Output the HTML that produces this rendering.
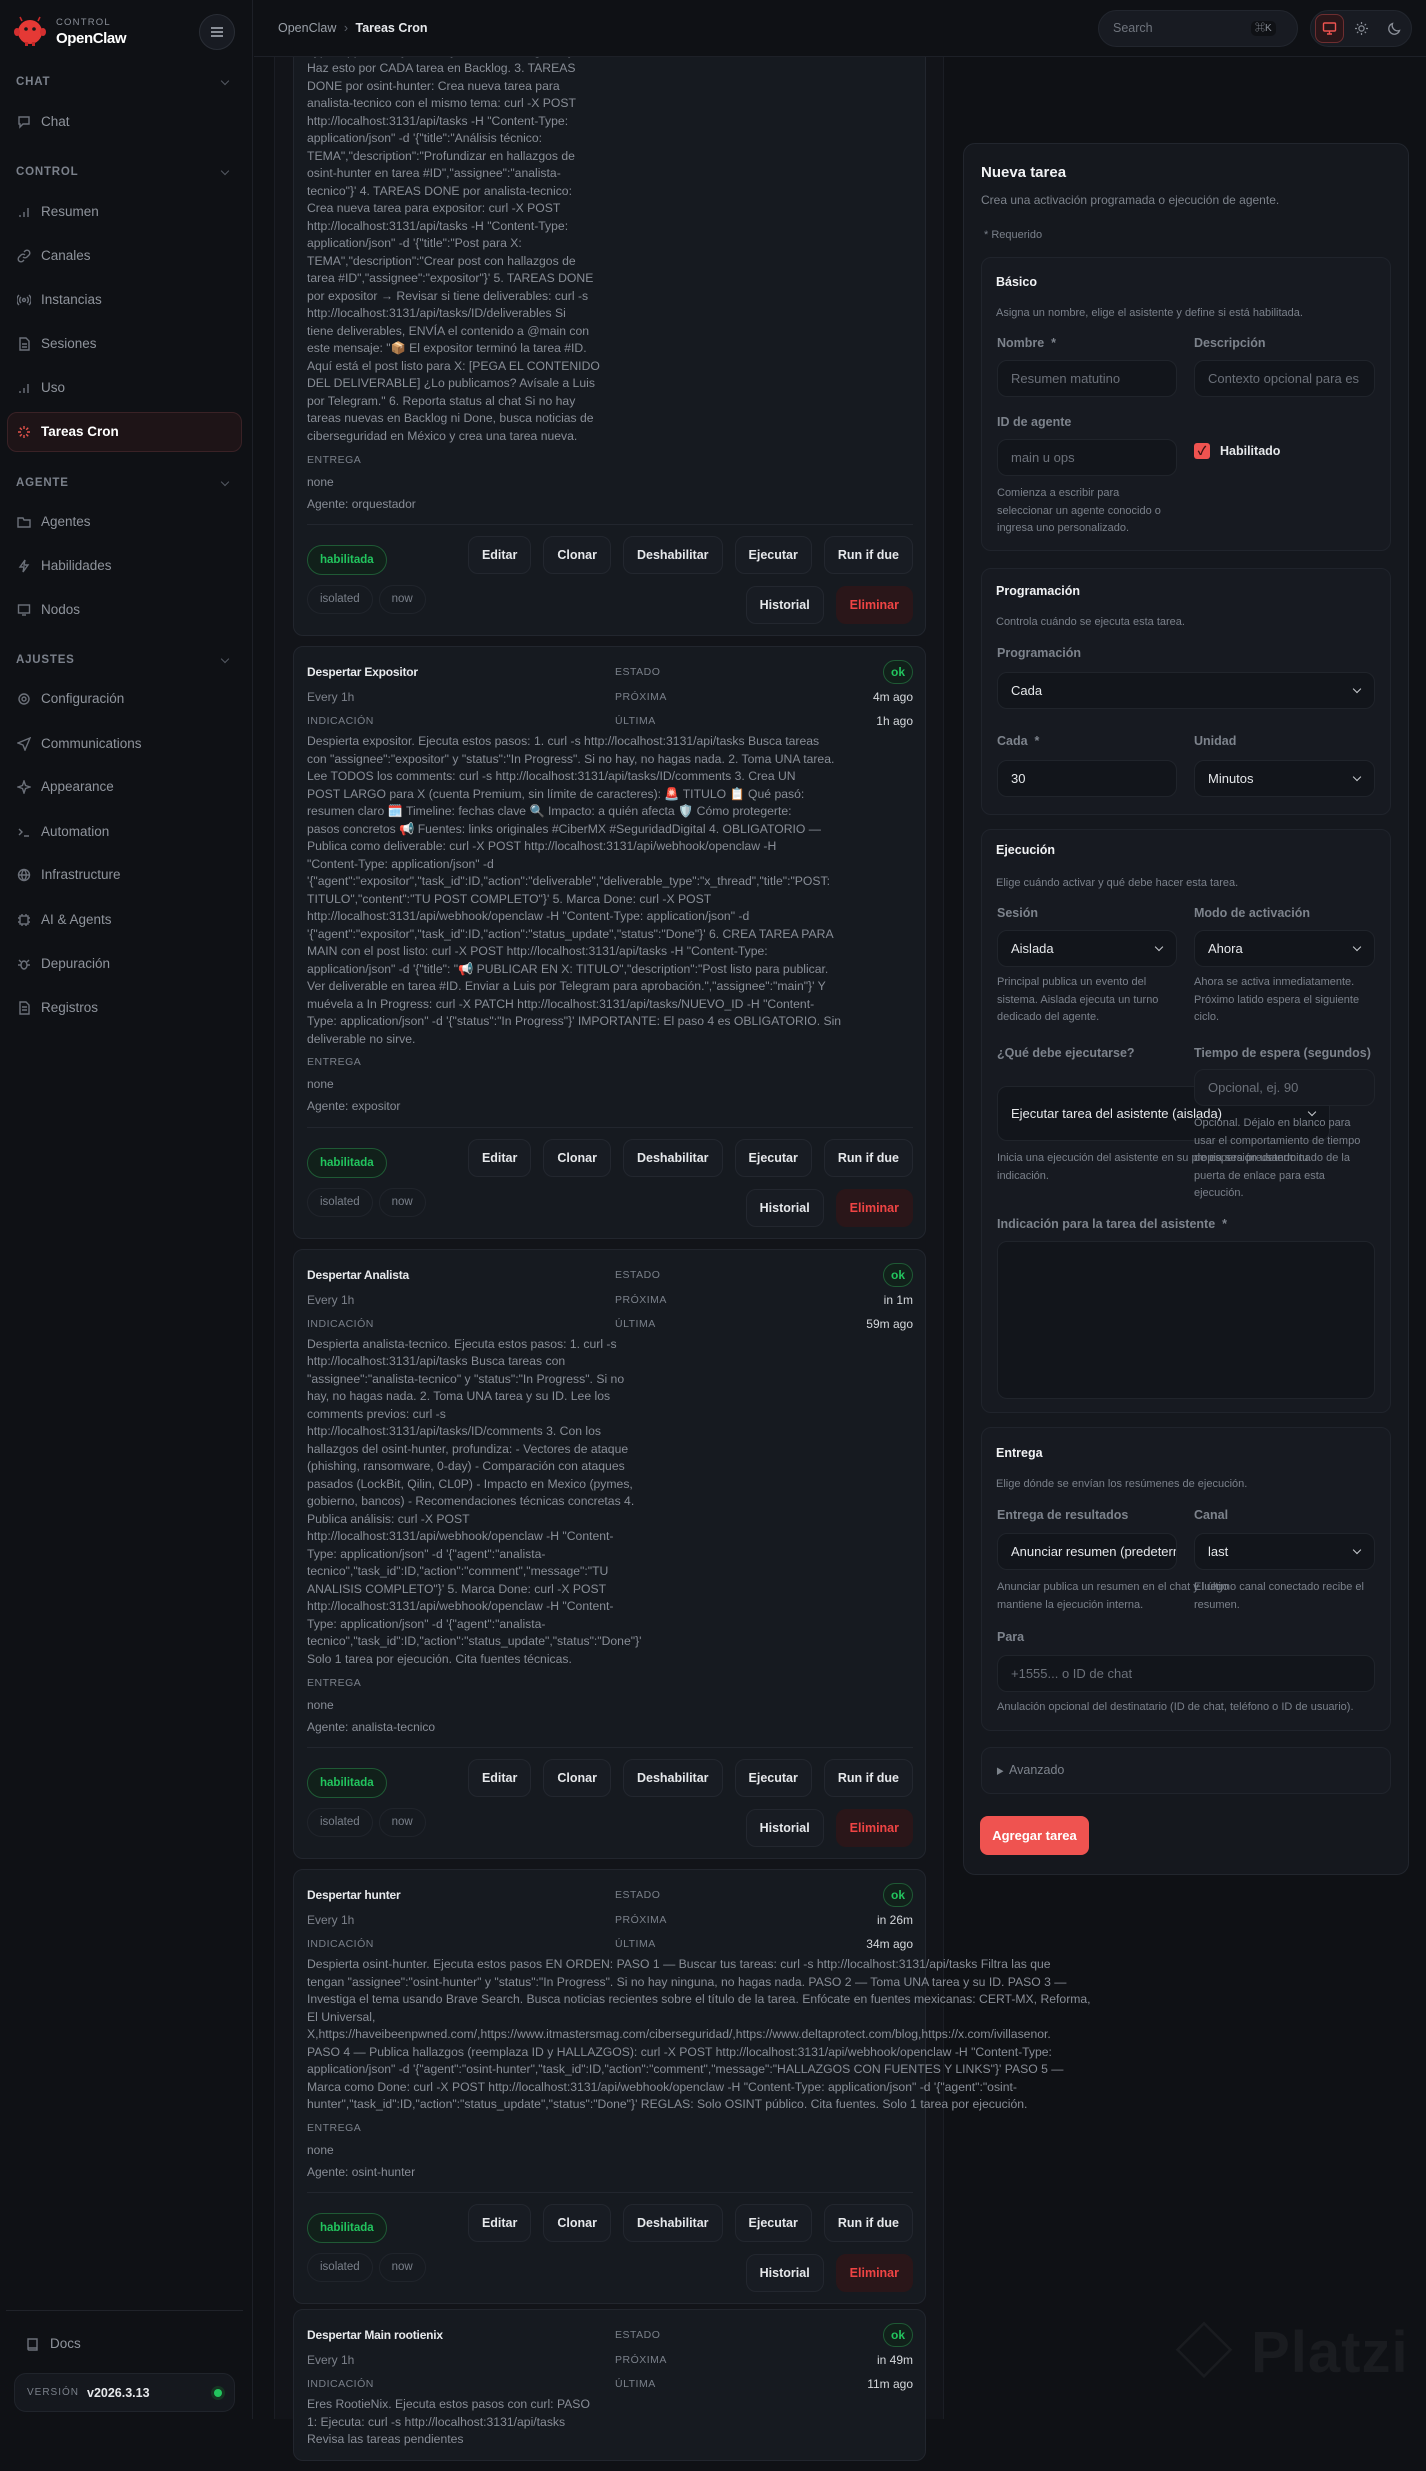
<!DOCTYPE html>
<html><head><meta charset="utf-8">
<style>
*{box-sizing:border-box;margin:0;padding:0}
body{width:1426px;height:2419px;overflow:hidden;background:#0f1115;font-family:"Liberation Sans","Noto Sans CJK JP",sans-serif;color:#c9ccd1;position:relative}
.abs{position:absolute}
.t{position:absolute;white-space:nowrap;line-height:18px}
#side{position:absolute;left:0;top:0;width:253px;height:2419px;background:#0f1115;border-right:1px solid #1d2027;z-index:5}
.sec{position:absolute;left:16px;font-size:11.5px;font-weight:700;letter-spacing:.8px;color:#7b818b;line-height:18px}
.chev{position:absolute;left:222px;width:6px;height:6px;border-right:1.2px solid #555a63;border-bottom:1.2px solid #555a63;transform:rotate(45deg)}
.nav{position:absolute;left:17px;font-size:13.5px;color:#8f949c;line-height:20px;display:flex;align-items:center;gap:10px}
.nav svg{width:14px;height:14px;stroke:#6c717a;fill:none;stroke-width:1.4}
#hdr{position:absolute;left:254px;top:0;width:1172px;height:57px;background:#0f1115;border-bottom:1px solid #1d2027;z-index:4}
#listbg{position:absolute;left:274px;top:57px;width:670px;height:2362px;background:#121419;border-left:1px solid #1b1e25;border-right:1px solid #1b1e25}
#cards{position:absolute;left:293px;top:-44.25px;width:633px;z-index:1}
.card{background:#161a20;border:1px solid #22262e;border-radius:10px;padding:12px 12px 11px 13px;margin-bottom:10px}
.row{display:flex;align-items:center}
.row .a{width:308px;font-size:12px;color:#7d828b}
.row .b{flex:1;font-size:10.5px;letter-spacing:.5px;color:#7a808a;text-transform:uppercase}
.row .c{font-size:12px;color:#d5d8dc;text-align:right}
.r1{height:26px}.r2,.r3{height:24px}
.title{font-size:15px;font-weight:700;color:#e8eaed!important;letter-spacing:-.2px}
.lab{font-size:10.5px!important;letter-spacing:.5px;text-transform:uppercase;color:#7a808a!important}
.ok{display:inline-block;width:30px;height:24px;border-radius:12px;border:1px solid #1f5a35;background:#11201a;color:#22c55e;font-size:12px;font-weight:700;line-height:22px;text-align:center}
.p{font-size:12.2px;line-height:17.5px;color:#888d96;white-space:nowrap;letter-spacing:0}
.ml{font-size:10.5px;letter-spacing:.5px;color:#7a808a;line-height:22px;margin-top:3.25px}
.mv{font-size:12px;color:#888d96;line-height:22px}
.ag{font-size:12px;color:#888d96;line-height:23px}
.sep{border-top:1px solid #22262e;margin-top:8.5px}
.act{display:flex;justify-content:space-between;padding-top:11px}
.pill{display:inline-block;height:30px;line-height:28px;padding:0 12px;border-radius:15px;border:1px solid #1f5a35;background:#11201a;color:#22c55e;font-size:11.5px;font-weight:700;margin-top:9px}
.tag{display:inline-block;height:29px;line-height:27px;padding:0 12px;border-radius:15px;border:1px solid #20242b;color:#7a808a;font-size:11.5px;margin-right:6px}
.btns{display:flex;gap:12px;justify-content:flex-end}
.btn{height:38px;line-height:36px;padding:0 13px;border-radius:10px;border:1px solid #23272f;background:#181c23;color:#e6e8eb;font-size:12.5px;font-weight:700}
.del{background:#2a1619;border-color:#2a1619;color:#ef4444}
#rp{position:absolute;left:963px;top:143px;width:446px;height:1732px;background:#15181e;border:1px solid #22262e;border-radius:12px}
.box{position:absolute;left:981px;width:410px;background:#171a21;border:1px solid #20242c;border-radius:10px}
.h{font-size:12.5px;font-weight:700;color:#f1f2f4}
.d{font-size:11px;color:#7a808a}
.lb{font-size:12.5px;color:#7d838c;font-weight:600}
.inp{position:absolute;height:37px;border-radius:10px;background:#12151b;border:1px solid #20242b;font-size:13px;color:#6b7079;line-height:35px;padding-left:13px;white-space:nowrap;overflow:hidden}
.sel{color:#e6e8eb}
.sel i{position:absolute;right:14px;top:13px;width:6px;height:6px;border-right:1.4px solid #c9ccd1;border-bottom:1.4px solid #c9ccd1;transform:rotate(45deg)}
.hp{font-size:11px;color:#7a808a;line-height:17.5px}
</style></head><body>

<div id="side">
 <svg class="abs" style="left:13px;top:15px" width="34" height="32" viewBox="0 0 34 32">
  <path d="M9 6 L7 2 M25 6 L27 2" stroke="#c62828" stroke-width="1.6"/>
  <ellipse cx="17" cy="17" rx="12" ry="12" fill="#e53935"/>
  <ellipse cx="4" cy="17" rx="3" ry="4" fill="#d32f2f"/><ellipse cx="30" cy="17" rx="3" ry="4" fill="#d32f2f"/>
  <circle cx="13" cy="14" r="1.8" fill="#1a1a1a"/><circle cx="21" cy="14" r="1.8" fill="#1a1a1a"/>
  <rect x="12" y="27" width="3" height="4" fill="#c62828"/><rect x="19" y="27" width="3" height="4" fill="#c62828"/>
 </svg>
 <div class="t" style="left:56px;top:14px;font-size:9.5px;letter-spacing:1.2px;color:#8a8f98">CONTROL</div>
 <div class="t" style="left:56px;top:30px;font-size:15px;font-weight:700;color:#fff;letter-spacing:-.4px">OpenClaw</div>
 <div class="abs" style="left:199px;top:14px;width:36px;height:36px;border-radius:18px;background:#181b22;border:1px solid #2a2e36"></div>
 <div class="abs" style="left:211px;top:27px;width:12px;height:1.5px;background:#8a8f98;box-shadow:0 4px 0 #8a8f98,0 8px 0 #8a8f98"></div>

 <div class="sec" style="top:73px">CHAT</div><div class="chev" style="top:78px"></div>
 <div class="nav" style="top:112px"><svg viewBox="0 0 14 14"><path d="M2 2h10v7H6l-3 3V9H2z"/></svg>Chat</div>
 <div class="sec" style="top:163px">CONTROL</div><div class="chev" style="top:168px"></div>
 <div class="nav" style="top:202px"><svg viewBox="0 0 14 14"><path d="M3 12V10M7 12V7M11 12V3"/></svg>Resumen</div>
 <div class="nav" style="top:246px"><svg viewBox="0 0 14 14"><path d="M6 8a3 3 0 0 0 4 0l2-2a2.5 2.5 0 0 0-4-4L7 3M8 6a3 3 0 0 0-4 0L2 8a2.5 2.5 0 0 0 4 4l1-1"/></svg>Canales</div>
 <div class="nav" style="top:290px"><svg viewBox="0 0 14 14"><circle cx="7" cy="7" r="1.5"/><path d="M4 4a4 4 0 0 0 0 6M10 4a4 4 0 0 1 0 6M2 2a7 7 0 0 0 0 10M12 2a7 7 0 0 1 0 10"/></svg>Instancias</div>
 <div class="nav" style="top:334px"><svg viewBox="0 0 14 14"><path d="M3 1h6l3 3v9H3zM5 7h5M5 10h5"/></svg>Sesiones</div>
 <div class="nav" style="top:378px"><svg viewBox="0 0 14 14"><path d="M3 12V10M7 12V7M11 12V3"/></svg>Uso</div>
 <div class="abs" style="left:7px;top:412px;width:235px;height:40px;border-radius:10px;background:#1e1417;border:1px solid #3a2226"></div>
 <div class="nav" style="top:422px;color:#fff;font-weight:700"><svg viewBox="0 0 14 14" style="stroke:#e5534b"><path d="M7 1v3M7 10v3M1 7h3M10 7h3M2.8 2.8l2 2M9.2 9.2l2 2M2.8 11.2l2-2M9.2 4.8l2-2"/></svg>Tareas Cron</div>
 <div class="sec" style="top:474px">AGENTE</div><div class="chev" style="top:479px"></div>
 <div class="nav" style="top:512px"><svg viewBox="0 0 14 14"><path d="M1 3h5l1 2h6v7H1z"/></svg>Agentes</div>
 <div class="nav" style="top:556px"><svg viewBox="0 0 14 14"><path d="M8 1L3 8h4l-1 5 5-7H7z"/></svg>Habilidades</div>
 <div class="nav" style="top:600px"><svg viewBox="0 0 14 14"><rect x="1.5" y="2" width="11" height="8"/><path d="M5 12h4"/></svg>Nodos</div>
 <div class="sec" style="top:651px">AJUSTES</div><div class="chev" style="top:656px"></div>
 <div class="nav" style="top:689px"><svg viewBox="0 0 14 14"><circle cx="7" cy="7" r="2"/><circle cx="7" cy="7" r="5"/></svg>Configuración</div>
 <div class="nav" style="top:734px"><svg viewBox="0 0 14 14"><path d="M13 1L1 6l5 2 2 5z"/></svg>Communications</div>
 <div class="nav" style="top:777px"><svg viewBox="0 0 14 14"><path d="M7 1l1.5 4.5L13 7l-4.5 1.5L7 13l-1.5-4.5L1 7l4.5-1.5z"/></svg>Appearance</div>
 <div class="nav" style="top:822px"><svg viewBox="0 0 14 14"><path d="M2 4l3 3-3 3M7 11h5"/></svg>Automation</div>
 <div class="nav" style="top:865px"><svg viewBox="0 0 14 14"><circle cx="7" cy="7" r="5.5"/><path d="M1.5 7h11M7 1.5c3 3 3 8 0 11M7 1.5c-3 3-3 8 0 11"/></svg>Infrastructure</div>
 <div class="nav" style="top:910px"><svg viewBox="0 0 14 14"><rect x="3" y="3" width="8" height="8"/><path d="M5 1v2M9 1v2M5 11v2M9 11v2M1 5h2M1 9h2M11 5h2M11 9h2"/></svg>AI &amp; Agents</div>
 <div class="nav" style="top:954px"><svg viewBox="0 0 14 14"><ellipse cx="7" cy="8" rx="3" ry="4"/><path d="M1 8h3M10 8h3M2 3l2 2M12 3l-2 2"/></svg>Depuración</div>
 <div class="nav" style="top:998px"><svg viewBox="0 0 14 14"><path d="M3 1h6l3 3v9H3zM5 6h5M5 9h5"/></svg>Registros</div>

 <div class="abs" style="left:6px;top:2310px;width:237px;border-top:1px solid #20232a"></div>
 <div class="nav" style="top:2334px;left:26px"><svg viewBox="0 0 14 14"><path d="M2 2h9v11H3a1 1 0 0 1-1-1zM2 11h9"/></svg>Docs</div>
 <div class="abs" style="left:14px;top:2373px;width:221px;height:39px;border-radius:12px;background:#15181e;border:1px solid #20242b"></div>
 <div class="t" style="left:27px;top:2384px;font-size:10px;letter-spacing:1px;color:#7a808a">VERSIÓN</div>
 <div class="t" style="left:87px;top:2384px;font-size:12.5px;font-weight:700;color:#e6e8eb">v2026.3.13</div>
 <div class="abs" style="left:211px;top:2386px;width:14px;height:14px;border-radius:7px;background:#163322"></div>
 <div class="abs" style="left:214px;top:2389px;width:8px;height:8px;border-radius:4px;background:#22c55e"></div>
</div>

<div id="hdr">
 <div class="t" style="left:24px;top:19px;font-size:12.5px;color:#9aa0a8">OpenClaw <span style="color:#5c616a;margin:0 4px">›</span> <b style="color:#e6e8eb">Tareas Cron</b></div>
 <div class="abs" style="left:844px;top:10px;width:200px;height:37px;border-radius:19px;background:#181b22;border:1px solid #22262e"></div>
 <div class="t" style="left:859px;top:19px;font-size:12.5px;color:#6f747d">Search</div>
 <div class="t" style="left:997px;font-size:10px;color:#8a8f98;background:#0f1115;border-radius:5px;padding:0 4px;line-height:15px;top:21px">⌘K</div>
 <div class="abs" style="left:1056px;top:10px;width:102px;height:37px;border-radius:19px;background:#181b22;border:1px solid #22262e"></div>
 <div class="abs" style="left:1061px;top:14px;width:29px;height:29px;border-radius:8px;background:#2a1619;border:1px solid #6e2e30"></div>
 <svg class="abs" style="left:1068px;top:21px" width="15" height="15" viewBox="0 0 15 15" fill="none" stroke="#ef5350" stroke-width="1.4"><rect x="1.5" y="2" width="12" height="8" rx="1"/><path d="M7.5 10v3M5 13h5"/></svg>
 <svg class="abs" style="left:1100px;top:21px" width="15" height="15" viewBox="0 0 15 15" fill="none" stroke="#8a8f98" stroke-width="1.2"><circle cx="7.5" cy="7.5" r="2.6"/><path d="M7.5 1v2M7.5 12v2M1 7.5h2M12 7.5h2M3 3l1.3 1.3M10.7 10.7L12 12M3 12l1.3-1.3M10.7 4.3L12 3"/></svg>
 <svg class="abs" style="left:1133px;top:21px" width="15" height="15" viewBox="0 0 15 15" fill="none" stroke="#8a8f98" stroke-width="1.3"><path d="M12.5 9.5A5.5 5.5 0 0 1 5.5 2.5a5.5 5.5 0 1 0 7 7z"/></svg>
</div>

<div id="listbg"></div>

<div id="cards">
<div class="card">
 <div class="row r1"><div class="a title">Despertar orquestador</div><div class="b">Estado</div><div class="c"><span class="ok">ok</span></div></div>
 <div class="row r2"><div class="a">Every 1h</div><div class="b">Próxima</div><div class="c">in 9m</div></div>
 <div class="row r3"><div class="a lab">Indicación</div><div class="b">Última</div><div class="c">51m ago</div></div>
 <div class="p">Type: application/json" -d '{"status":"In Progress"}'<br>Haz esto por CADA tarea en Backlog. 3. TAREAS<br>DONE por osint-hunter: Crea nueva tarea para<br>analista-tecnico con el mismo tema: curl -X POST<br>http://localhost:3131/api/tasks -H "Content-Type:<br>application/json" -d '{"title":"Análisis técnico:<br>TEMA","description":"Profundizar en hallazgos de<br>osint-hunter en tarea #ID","assignee":"analista-<br>tecnico"}' 4. TAREAS DONE por analista-tecnico:<br>Crea nueva tarea para expositor: curl -X POST<br>http://localhost:3131/api/tasks -H "Content-Type:<br>application/json" -d '{"title":"Post para X:<br>TEMA","description":"Crear post con hallazgos de<br>tarea #ID","assignee":"expositor"}' 5. TAREAS DONE<br>por expositor → Revisar si tiene deliverables: curl -s<br>http://localhost:3131/api/tasks/ID/deliverables Si<br>tiene deliverables, ENVÍA el contenido a @main con<br>este mensaje: "📦 El expositor terminó la tarea #ID.<br>Aquí está el post listo para X: [PEGA EL CONTENIDO<br>DEL DELIVERABLE] ¿Lo publicamos? Avísale a Luis<br>por Telegram." 6. Reporta status al chat Si no hay<br>tareas nuevas en Backlog ni Done, busca noticias de<br>ciberseguridad en México y crea una tarea nueva.</div>
 <div class="ml">ENTREGA</div><div class="mv">none</div><div class="ag">Agente: orquestador</div>
 <div class="sep"></div>
 <div class="act"><div><span class="pill">habilitada</span><div style="margin-top:10px"><span class="tag">isolated</span><span class="tag">now</span></div></div>
 <div><div class="btns"><span class="btn">Editar</span><span class="btn">Clonar</span><span class="btn">Deshabilitar</span><span class="btn">Ejecutar</span><span class="btn">Run if due</span></div>
 <div class="btns" style="margin-top:12px"><span class="btn">Historial</span><span class="btn del">Eliminar</span></div></div></div>
</div>
<div class="card">
 <div class="row r1"><div class="a title">Despertar Expositor</div><div class="b">Estado</div><div class="c"><span class="ok">ok</span></div></div>
 <div class="row r2"><div class="a">Every 1h</div><div class="b">Próxima</div><div class="c">4m ago</div></div>
 <div class="row r3"><div class="a lab">Indicación</div><div class="b">Última</div><div class="c">1h ago</div></div>
 <div class="p">Despierta expositor. Ejecuta estos pasos: 1. curl -s http://localhost:3131/api/tasks Busca tareas<br>con "assignee":"expositor" y "status":"In Progress". Si no hay, no hagas nada. 2. Toma UNA tarea.<br>Lee TODOS los comments: curl -s http://localhost:3131/api/tasks/ID/comments 3. Crea UN<br>POST LARGO para X (cuenta Premium, sin límite de caracteres): 🚨 TITULO 📋 Qué pasó:<br>resumen claro 🗓️ Timeline: fechas clave 🔍 Impacto: a quién afecta 🛡️ Cómo protegerte:<br>pasos concretos 📢 Fuentes: links originales #CiberMX #SeguridadDigital 4. OBLIGATORIO —<br>Publica como deliverable: curl -X POST http://localhost:3131/api/webhook/openclaw -H<br>"Content-Type: application/json" -d<br>'{"agent":"expositor","task_id":ID,"action":"deliverable","deliverable_type":"x_thread","title":"POST:<br>TITULO","content":"TU POST COMPLETO"}' 5. Marca Done: curl -X POST<br>http://localhost:3131/api/webhook/openclaw -H "Content-Type: application/json" -d<br>'{"agent":"expositor","task_id":ID,"action":"status_update","status":"Done"}' 6. CREA TAREA PARA<br>MAIN con el post listo: curl -X POST http://localhost:3131/api/tasks -H "Content-Type:<br>application/json" -d '{"title": "📢 PUBLICAR EN X: TITULO","description":"Post listo para publicar.<br>Ver deliverable en tarea #ID. Enviar a Luis por Telegram para aprobación.","assignee":"main"}' Y<br>muévela a In Progress: curl -X PATCH http://localhost:3131/api/tasks/NUEVO_ID -H "Content-<br>Type: application/json" -d '{"status":"In Progress"}' IMPORTANTE: El paso 4 es OBLIGATORIO. Sin<br>deliverable no sirve.</div>
 <div class="ml">ENTREGA</div><div class="mv">none</div><div class="ag">Agente: expositor</div>
 <div class="sep"></div>
 <div class="act"><div><span class="pill">habilitada</span><div style="margin-top:10px"><span class="tag">isolated</span><span class="tag">now</span></div></div>
 <div><div class="btns"><span class="btn">Editar</span><span class="btn">Clonar</span><span class="btn">Deshabilitar</span><span class="btn">Ejecutar</span><span class="btn">Run if due</span></div>
 <div class="btns" style="margin-top:12px"><span class="btn">Historial</span><span class="btn del">Eliminar</span></div></div></div>
</div>
<div class="card">
 <div class="row r1"><div class="a title">Despertar Analista</div><div class="b">Estado</div><div class="c"><span class="ok">ok</span></div></div>
 <div class="row r2"><div class="a">Every 1h</div><div class="b">Próxima</div><div class="c">in 1m</div></div>
 <div class="row r3"><div class="a lab">Indicación</div><div class="b">Última</div><div class="c">59m ago</div></div>
 <div class="p">Despierta analista-tecnico. Ejecuta estos pasos: 1. curl -s<br>http://localhost:3131/api/tasks Busca tareas con<br>"assignee":"analista-tecnico" y "status":"In Progress". Si no<br>hay, no hagas nada. 2. Toma UNA tarea y su ID. Lee los<br>comments previos: curl -s<br>http://localhost:3131/api/tasks/ID/comments 3. Con los<br>hallazgos del osint-hunter, profundiza: - Vectores de ataque<br>(phishing, ransomware, 0-day) - Comparación con ataques<br>pasados (LockBit, Qilin, CL0P) - Impacto en Mexico (pymes,<br>gobierno, bancos) - Recomendaciones técnicas concretas 4.<br>Publica análisis: curl -X POST<br>http://localhost:3131/api/webhook/openclaw -H "Content-<br>Type: application/json" -d '{"agent":"analista-<br>tecnico","task_id":ID,"action":"comment","message":"TU<br>ANALISIS COMPLETO"}' 5. Marca Done: curl -X POST<br>http://localhost:3131/api/webhook/openclaw -H "Content-<br>Type: application/json" -d '{"agent":"analista-<br>tecnico","task_id":ID,"action":"status_update","status":"Done"}'<br>Solo 1 tarea por ejecución. Cita fuentes técnicas.</div>
 <div class="ml">ENTREGA</div><div class="mv">none</div><div class="ag">Agente: analista-tecnico</div>
 <div class="sep"></div>
 <div class="act"><div><span class="pill">habilitada</span><div style="margin-top:10px"><span class="tag">isolated</span><span class="tag">now</span></div></div>
 <div><div class="btns"><span class="btn">Editar</span><span class="btn">Clonar</span><span class="btn">Deshabilitar</span><span class="btn">Ejecutar</span><span class="btn">Run if due</span></div>
 <div class="btns" style="margin-top:12px"><span class="btn">Historial</span><span class="btn del">Eliminar</span></div></div></div>
</div>
<div class="card">
 <div class="row r1"><div class="a title">Despertar hunter</div><div class="b">Estado</div><div class="c"><span class="ok">ok</span></div></div>
 <div class="row r2"><div class="a">Every 1h</div><div class="b">Próxima</div><div class="c">in 26m</div></div>
 <div class="row r3"><div class="a lab">Indicación</div><div class="b">Última</div><div class="c">34m ago</div></div>
 <div class="p">Despierta osint-hunter. Ejecuta estos pasos EN ORDEN: PASO 1 — Buscar tus tareas: curl -s http://localhost:3131/api/tasks Filtra las que<br>tengan "assignee":"osint-hunter" y "status":"In Progress". Si no hay ninguna, no hagas nada. PASO 2 — Toma UNA tarea y su ID. PASO 3 —<br>Investiga el tema usando Brave Search. Busca noticias recientes sobre el título de la tarea. Enfócate en fuentes mexicanas: CERT-MX, Reforma,<br>El Universal,<br>X,https://haveibeenpwned.com/,https://www.itmastersmag.com/ciberseguridad/,https://www.deltaprotect.com/blog,https://x.com/ivillasenor.<br>PASO 4 — Publica hallazgos (reemplaza ID y HALLAZGOS): curl -X POST http://localhost:3131/api/webhook/openclaw -H "Content-Type:<br>application/json" -d '{"agent":"osint-hunter","task_id":ID,"action":"comment","message":"HALLAZGOS CON FUENTES Y LINKS"}' PASO 5 —<br>Marca como Done: curl -X POST http://localhost:3131/api/webhook/openclaw -H "Content-Type: application/json" -d '{"agent":"osint-<br>hunter","task_id":ID,"action":"status_update","status":"Done"}' REGLAS: Solo OSINT público. Cita fuentes. Solo 1 tarea por ejecución.</div>
 <div class="ml">ENTREGA</div><div class="mv">none</div><div class="ag">Agente: osint-hunter</div>
 <div class="sep"></div>
 <div class="act"><div><span class="pill">habilitada</span><div style="margin-top:10px"><span class="tag">isolated</span><span class="tag">now</span></div></div>
 <div><div class="btns"><span class="btn">Editar</span><span class="btn">Clonar</span><span class="btn">Deshabilitar</span><span class="btn">Ejecutar</span><span class="btn">Run if due</span></div>
 <div class="btns" style="margin-top:12px"><span class="btn">Historial</span><span class="btn del">Eliminar</span></div></div></div>
</div>
<div class="card" style="margin-top:-5px">
 <div class="row r1"><div class="a title">Despertar Main rootienix</div><div class="b">Estado</div><div class="c"><span class="ok">ok</span></div></div>
 <div class="row r2"><div class="a">Every 1h</div><div class="b">Próxima</div><div class="c">in 49m</div></div>
 <div class="row r3"><div class="a lab">Indicación</div><div class="b">Última</div><div class="c">11m ago</div></div>
 <div class="p">Eres RootieNix. Ejecuta estos pasos con curl: PASO<br>1: Ejecuta: curl -s http://localhost:3131/api/tasks<br>Revisa las tareas pendientes</div>
</div>
</div>

<div id="rp"></div>
<div class="t h" style="left:981px;top:164px;font-size:15px">Nueva tarea</div>
<div class="t" style="left:981px;top:191px;font-size:12px;color:#7d838c">Crea una activación programada o ejecución de agente.</div>
<div class="t d" style="left:984px;top:226px">* Requerido</div>

<div class="box" style="top:257px;height:294px"></div>
<div class="t h" style="left:996px;top:273px">Básico</div>
<div class="t d" style="left:996px;top:304px">Asigna un nombre, elige el asistente y define si está habilitada.</div>
<div class="t lb" style="left:997px;top:334px">Nombre &nbsp;*</div>
<div class="t lb" style="left:1194px;top:334px">Descripción</div>
<div class="inp" style="left:997px;top:360px;width:180px">Resumen matutino</div>
<div class="inp" style="left:1194px;top:360px;width:181px">Contexto opcional para es</div>
<div class="t lb" style="left:997px;top:413px">ID de agente</div>
<div class="inp" style="left:997px;top:439px;width:180px">main u ops</div>
<div class="abs" style="left:1194px;top:443px;width:16px;height:16px;border-radius:3px;background:#ef5350;color:#3a1213;font-size:12px;line-height:16px;text-align:center;font-weight:700">✓</div>
<div class="t" style="left:1220px;top:442px;font-size:12.5px;font-weight:700;color:#e6e8eb">Habilitado</div>
<div class="t hp" style="left:997px;top:485px">Comienza a escribir para<br>seleccionar un agente conocido o<br>ingresa uno personalizado.</div>

<div class="box" style="top:568px;height:247px"></div>
<div class="t h" style="left:996px;top:582px">Programación</div>
<div class="t d" style="left:996px;top:613px">Controla cuándo se ejecuta esta tarea.</div>
<div class="t lb" style="left:997px;top:644px">Programación</div>
<div class="inp sel" style="left:997px;top:672px;width:378px">Cada<i></i></div>
<div class="t lb" style="left:997px;top:732px">Cada &nbsp;*</div>
<div class="t lb" style="left:1194px;top:732px">Unidad</div>
<div class="inp sel" style="left:997px;top:760px;width:180px">30</div>
<div class="inp sel" style="left:1194px;top:760px;width:181px">Minutos<i></i></div>

<div class="box" style="top:829px;height:584px"></div>
<div class="t h" style="left:996px;top:841px">Ejecución</div>
<div class="t d" style="left:996px;top:874px">Elige cuándo activar y qué debe hacer esta tarea.</div>
<div class="t lb" style="left:997px;top:904px">Sesión</div>
<div class="t lb" style="left:1194px;top:904px">Modo de activación</div>
<div class="inp sel" style="left:997px;top:930px;width:180px">Aislada<i></i></div>
<div class="inp sel" style="left:1194px;top:930px;width:181px">Ahora<i></i></div>
<div class="t hp" style="left:997px;top:974px">Principal publica un evento del<br>sistema. Aislada ejecuta un turno<br>dedicado del agente.</div>
<div class="t hp" style="left:1194px;top:974px">Ahora se activa inmediatamente.<br>Próximo latido espera el siguiente<br>ciclo.</div>
<div class="t lb" style="left:997px;top:1044px">¿Qué debe ejecutarse?</div>
<div class="t lb" style="left:1194px;top:1044px">Tiempo de espera (segundos)</div>
<div class="inp sel" style="left:997px;top:1086px;width:333px;height:55px;line-height:53px">Ejecutar tarea del asistente (aislada)<i style="top:22px"></i></div>
<div class="t hp" style="left:997px;top:1150px">Inicia una ejecución del asistente en su propia sesión usando tu<br>indicación.</div>
<div class="inp" style="left:1194px;top:1069px;width:181px;background:#171a21">Opcional, ej. 90</div>
<div class="t hp" style="left:1194px;top:1115px">Opcional. Déjalo en blanco para<br>usar el comportamiento de tiempo<br>de espera predeterminado de la<br>puerta de enlace para esta<br>ejecución.</div>
<div class="t lb" style="left:997px;top:1215px">Indicación para la tarea del asistente &nbsp;*</div>
<div class="inp" style="left:997px;top:1241px;width:378px;height:158px"></div>

<div class="box" style="top:1427px;height:304px"></div>
<div class="t h" style="left:996px;top:1444px">Entrega</div>
<div class="t d" style="left:996px;top:1475px">Elige dónde se envían los resúmenes de ejecución.</div>
<div class="t lb" style="left:997px;top:1506px">Entrega de resultados</div>
<div class="t lb" style="left:1194px;top:1506px">Canal</div>
<div class="inp sel" style="left:997px;top:1533px;width:180px">Anunciar resumen (predeterminado)</div>
<div class="inp sel" style="left:1194px;top:1533px;width:181px">last<i></i></div>
<div class="t hp" style="left:997px;top:1579px">Anunciar publica un resumen en el chat y luego<br>mantiene la ejecución interna.</div>
<div class="t hp" style="left:1194px;top:1579px">El último canal conectado recibe el<br>resumen.</div>
<div class="t lb" style="left:997px;top:1628px">Para</div>
<div class="inp" style="left:997px;top:1655px;width:378px">+1555... o ID de chat</div>
<div class="t hp" style="left:997px;top:1699px">Anulación opcional del destinatario (ID de chat, teléfono o ID de usuario).</div>

<div class="box" style="top:1747px;height:47px"></div>
<div class="t" style="left:996px;top:1761px;font-size:12.5px;color:#7d838c"><span style="font-size:8px;margin-right:5px">▶</span>Avanzado</div>
<div class="abs" style="left:980px;top:1816px;width:109px;height:39px;border-radius:8px;background:#ef5350;color:#fff;font-size:13px;font-weight:700;line-height:39px;text-align:center">Agregar tarea</div>

<div class="t" style="left:1175px;top:2318px;font-size:58px;line-height:70px;font-weight:700;color:#1a1c20;letter-spacing:1px">◇ Platzi</div>
</body></html>
